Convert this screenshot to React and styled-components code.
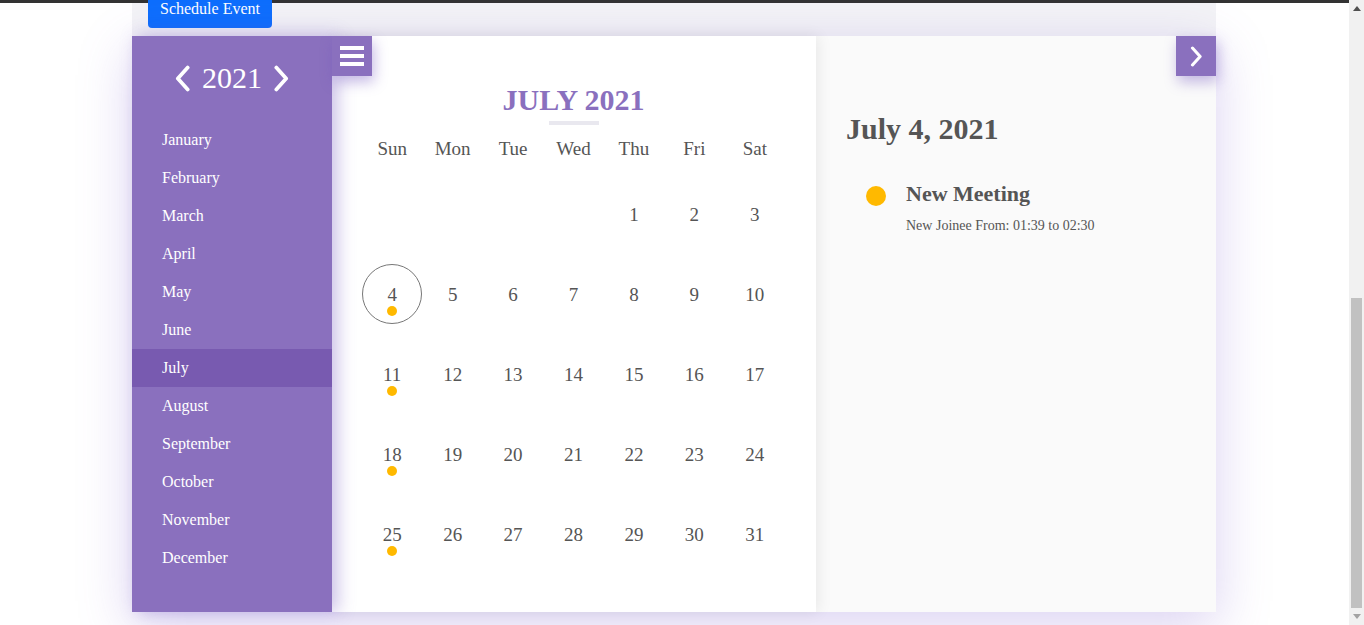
import React from "react";
import styled, { createGlobalStyle, css } from "styled-components";

const GlobalStyle = createGlobalStyle`
  body {
    margin: 0;
    font-family: "Liberation Serif", "Times New Roman", serif;
    background: #ffffff;
    color: #555555;
  }
`;

const PURPLE = "#8a70be";

const Screen = styled.div`
  display: flex;
  height: 100vh;
  overflow: hidden;
`;

const Main = styled.main`
  flex: 1;
  min-width: 0;
`;

const ScrollRail = styled.div`
  width: 15px;
  flex: none;
  background: #f1f1f1;
  display: flex;
  flex-direction: column;
`;

const RailArrow = styled.div`
  height: 17px;
  display: flex;
  align-items: center;
  justify-content: center;
`;

const RailTrack = styled.div`
  flex: 1;
  display: flex;
  flex-direction: column;
  padding-top: 281px;
`;

const RailThumb = styled.div`
  flex: 1;
  margin: 0 2px 0 2px;
  background: #c1c1c1;
`;

const TopStrip = styled.div`
  height: 3px;
  background: #333333;
`;

const Page = styled.div`
  width: 1084px;
  margin-left: calc((100% - 1085px) / 2);
`;

const ActionBand = styled.div`
  height: 33px;
  background: #f3f3f6;
  padding-left: 16px;
  display: flex;
  align-items: flex-start;
`;

const PrimaryButton = styled.button`
  margin-top: -13px;
  height: 38px;
  padding: 0 12px;
  border: none;
  border-radius: 4px;
  background: #0d6efd;
  color: #ffffff;
  font-family: inherit;
  font-size: 16px;
  line-height: 38px;
`;

const Card = styled.div`
  position: relative;
  display: flex;
  height: 576px;
  box-shadow: 0 14px 50px rgba(125, 95, 210, 0.28);
`;

const Sidebar = styled.aside`
  position: relative;
  z-index: 3;
  width: 200px;
  flex: none;
  background: ${PURPLE};
  box-shadow: 6px 0 16px rgba(110, 80, 190, 0.35);
  color: #ffffff;
`;

const YearNav = styled.div`
  height: 40px;
  margin: 22px 0 23px;
  display: flex;
  align-items: center;
  justify-content: center;
  gap: 11px;
`;

const YearText = styled.span`
  font-size: 30px;
  line-height: 40px;
`;

const MonthList = styled.ul`
  list-style: none;
  margin: 0;
  padding: 0;
`;

const MonthItem = styled.li`
  height: 38px;
  line-height: 38px;
  padding-left: 30px;
  font-size: 16px;
  ${(p) =>
    p.$active &&
    css`
      background: #785ab0;
    `}
`;

const CornerButton = styled.div`
  position: absolute;
  top: 0;
  ${(p) => (p.$side === "left" ? "left: 200px;" : "right: 0;")}
  z-index: 4;
  width: 40px;
  height: 40px;
  background: ${PURPLE};
  display: flex;
  align-items: center;
  justify-content: center;
  box-shadow: 2px 6px 14px rgba(110, 80, 190, 0.4);
`;

const Burger = styled.div`
  display: flex;
  flex-direction: column;
  gap: 4px;
`;

const BurgerBar = styled.span`
  display: block;
  width: 24px;
  height: 4px;
  background: #ffffff;
`;

const CalendarPane = styled.section`
  position: relative;
  z-index: 2;
  width: 484px;
  flex: none;
  box-sizing: border-box;
  padding: 0 31px 0 30px;
  background: #ffffff;
  box-shadow: 2px 0 14px rgba(0, 0, 0, 0.08);
  display: flex;
  flex-direction: column;
  align-items: center;
`;

const MonthTitle = styled.h2`
  margin: 47px 0 0;
  font-size: 30px;
  line-height: 34px;
  font-weight: bold;
  color: ${PURPLE};
`;

const TitleRule = styled.div`
  width: 50px;
  height: 4px;
  margin-top: 4px;
  background: #e9e8ef;
`;

const Grid = styled.div`
  width: 100%;
  display: grid;
  grid-template-columns: repeat(7, 1fr);
`;

const WeekHeader = styled(Grid)`
  margin-top: 9px;
  margin-bottom: 11px;
`;

const WeekDay = styled.div`
  height: 30px;
  line-height: 30px;
  text-align: center;
  font-size: 19px;
  color: #555555;
`;

const DayCell = styled.div`
  position: relative;
  height: 80px;
  display: flex;
  align-items: center;
  justify-content: center;
  font-size: 19px;
  color: #555555;
`;

const DayNumber = styled.span`
  position: relative;
  line-height: 22px;
`;

const SelectedRing = styled.span`
  position: absolute;
  left: 50%;
  top: 50%;
  width: 58px;
  height: 58px;
  margin: -31px 0 0 -30px;
  border: 1px solid #777777;
  border-radius: 50%;
`;

const EventDot = styled.span`
  position: absolute;
  left: 50%;
  top: 22px;
  width: 10px;
  height: 10px;
  margin-left: -5px;
  border-radius: 50%;
  background: #ffb900;
`;

const DetailPane = styled.section`
  position: relative;
  flex: 1;
  background: #fafafa;
  padding-left: 30px;
`;

const DetailDate = styled.h1`
  margin: 76px 0 0;
  font-size: 30px;
  line-height: 34px;
  font-weight: bold;
  color: #555555;
`;

const EventRow = styled.div`
  display: flex;
  gap: 20px;
  margin: 35px 0 0 20px;
`;

const EventMarker = styled.span`
  width: 20px;
  height: 20px;
  margin-top: 5px;
  border-radius: 50%;
  background: #ffb900;
  flex: none;
`;

const EventBody = styled.div`
  display: flex;
  flex-direction: column;
`;

const EventTitle = styled.div`
  font-size: 22px;
  line-height: 26px;
  font-weight: bold;
  color: #555555;
`;

const EventDesc = styled.div`
  margin-top: 11px;
  font-size: 14px;
  line-height: 16px;
  color: #555555;
`;

const Chevron = ({ dir, w = 16, h = 26, sw = 3.6 }) => (
  <svg width={w} height={h} viewBox="0 0 16 26" fill="none">
    <path
      d={dir === "left" ? "M13 2.5 L3.5 13 L13 23.5" : "M3 2.5 L12.5 13 L3 23.5"}
      stroke="#ffffff"
      strokeWidth={sw}
      strokeLinecap="round"
      strokeLinejoin="round"
    />
  </svg>
);

const RailTriangle = ({ up }) => (
  <svg width="8" height="5" viewBox="0 0 8 5">
    <path d={up ? "M0 5 L4 0 L8 5 Z" : "M0 0 L4 5 L8 0 Z"} fill={up ? "#505050" : "#a3a3a3"} />
  </svg>
);

const MONTHS = [
  "January", "February", "March", "April", "May", "June",
  "July", "August", "September", "October", "November", "December",
];
const WEEK = ["Sun", "Mon", "Tue", "Wed", "Thu", "Fri", "Sat"];
const EVENT_DAYS = new Set([4, 11, 18, 25]);

export default function App() {
  const cells = [];
  for (let i = 0; i < 4; i++) cells.push(null);
  for (let d = 1; d <= 31; d++) cells.push(d);

  return (
    <>
      <GlobalStyle />
      <Screen>
        <Main>
          <TopStrip />
          <Page>
            <ActionBand>
              <PrimaryButton>Schedule Event</PrimaryButton>
            </ActionBand>
            <Card>
              <Sidebar>
                <YearNav>
                  <Chevron dir="left" w={17} h={27} />
                  <YearText>2021</YearText>
                  <Chevron dir="right" w={17} h={27} />
                </YearNav>
                <MonthList>
                  {MONTHS.map((m) => (
                    <MonthItem key={m} $active={m === "July"}>
                      {m}
                    </MonthItem>
                  ))}
                </MonthList>
              </Sidebar>
              <CornerButton $side="left">
                <Burger>
                  <BurgerBar />
                  <BurgerBar />
                  <BurgerBar />
                </Burger>
              </CornerButton>
              <CalendarPane>
                <MonthTitle>JULY 2021</MonthTitle>
                <TitleRule />
                <WeekHeader>
                  {WEEK.map((w) => (
                    <WeekDay key={w}>{w}</WeekDay>
                  ))}
                </WeekHeader>
                <Grid>
                  {cells.map((d, i) => (
                    <DayCell key={i}>
                      {d === 4 && <SelectedRing />}
                      {d && (
                        <DayNumber>
                          {d}
                          {EVENT_DAYS.has(d) && <EventDot />}
                        </DayNumber>
                      )}
                    </DayCell>
                  ))}
                </Grid>
              </CalendarPane>
              <DetailPane>
                <DetailDate>July 4, 2021</DetailDate>
                <EventRow>
                  <EventMarker />
                  <EventBody>
                    <EventTitle>New Meeting</EventTitle>
                    <EventDesc>New Joinee From: 01:39 to 02:30</EventDesc>
                  </EventBody>
                </EventRow>
              </DetailPane>
              <CornerButton $side="right">
                <Chevron dir="right" w={13} h={21} sw={3.8} />
              </CornerButton>
            </Card>
          </Page>
        </Main>
        <ScrollRail>
          <RailArrow>
            <RailTriangle up />
          </RailArrow>
          <RailTrack>
            <RailThumb />
          </RailTrack>
          <RailArrow>
            <RailTriangle />
          </RailArrow>
        </ScrollRail>
      </Screen>
    </>
  );
}
